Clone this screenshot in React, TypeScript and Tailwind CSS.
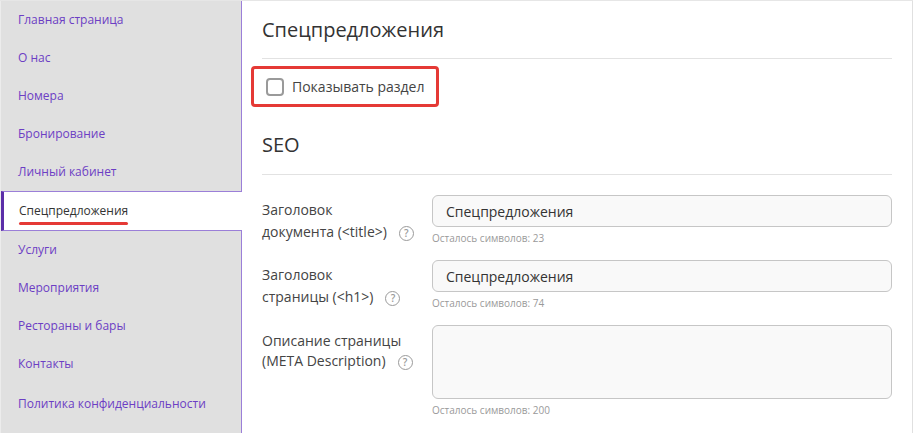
const MENU = [
  "Главная страница",
  "О нас",
  "Номера",
  "Бронирование",
  "Личный кабинет",
  "Спецпредложения",
  "Услуги",
  "Мероприятия",
  "Рестораны и бары",
  "Контакты",
  "Политика конфиденциальности",
];

const ACTIVE = "Спецпредложения";

const HelpIcon = () => (
  <span className="ml-[12px] inline-flex h-[15px] w-[15px] items-center justify-center rounded-full border-[1.5px] border-[#9a9a9a] align-middle text-[10px] font-semibold leading-none text-[#9a9a9a]">
    ?
  </span>
);

interface FieldProps {
  lines: string[];
  value?: string;
  left: number;
  multiline?: boolean;
}

const Field = ({ lines, value, left, multiline }: FieldProps) => (
  <div className="flex">
    <div className={`w-[170px] shrink-0 text-[14px] text-[#444] ${multiline ? "pt-[6px] leading-[20px]" : "pt-[4px] leading-[22px]"}`}>
      {lines[0]}
      <br />
      {lines[1]}
      <HelpIcon />
    </div>
    <div className="flex-1">
      {multiline ? (
        <div className="h-[74px] rounded-[6px] border border-[#c6c6c6] bg-[#f9f9f9]" />
      ) : (
        <div className="relative flex h-[32px] items-center rounded-[6px] border border-[#c6c6c6] bg-[#f9f9f9] px-[13px] text-[14px] text-[#333]">
          {value}
        </div>
      )}
      <div className="mt-[4px] text-[10px] leading-[14px] text-[#9a9a9a]">
        Осталось символов: {left}
      </div>
    </div>
  </div>
);

export default function App() {
  return (
    <div
      className="flex h-[433px] w-[913px] border-t border-[#e6e6e6] bg-white"
      style={{ fontFamily: '"Open Sans", "Noto Sans", sans-serif' }}
    >
      <nav className="w-[242px] shrink-0 border-l border-l-[#ececec] border-r border-r-[#9b7fd8] bg-[#e0e0e0]">
        {MENU.map((item, i) =>
          item === ACTIVE ? (
            <div
              key={item}
              className="relative z-10 mr-[-1px] flex h-[40px] items-center border-y border-l-[3px] border-y-[#9b7fd8] border-l-[#5b2ea8] bg-white pl-[15px] text-[12px] text-[#333]"
            >
              <span className="relative">
                {item}
                <span className="absolute left-0 right-0 top-[20px] h-[3px] rounded-full bg-[#e53935]" />
              </span>
            </div>
          ) : (
            <div
              key={item}
              className={`flex items-center pl-[17px] text-[12px] text-[#6c3ec4] ${i === MENU.length - 1 ? "h-[40px] pt-[2px]" : "h-[38px]"}`}
            >
              {item}
            </div>
          )
        )}
      </nav>

      <main className="flex-1 border-r border-[#e0e0e0] px-[20px]">
        <div className="border-b border-[#e2e2e2] pb-[15px] pt-[16px] text-[20px] leading-[26px] text-[#333]">
          Спецпредложения
        </div>

        <div className="ml-[-11px] mt-[7px] flex h-[41px] w-[188px] items-center gap-[8px] rounded-[4px] border-[3px] border-[#e53935] pl-[12px]">
          <span className="h-[18px] w-[18px] rounded-[4px] border-2 border-[#9a9a9a] bg-white" />
          <span className="text-[14px] text-[#444]">Показывать раздел</span>
        </div>

        <div className="mt-[25px] border-b border-[#e2e2e2] pb-[16px] text-[20px] leading-[26px] text-[#333]">
          SEO
        </div>

        <div className="mt-[20px] flex flex-col gap-[15px]">
          <Field lines={["Заголовок", "документа (<title>)"]} value="Спецпредложения" left={23} />
          <Field lines={["Заголовок", "страницы (<h1>)"]} value="Спецпредложения" left={74} />
          <Field lines={["Описание страницы", "(META Description)"]} left={200} multiline />
        </div>
      </main>
    </div>
  );
}
